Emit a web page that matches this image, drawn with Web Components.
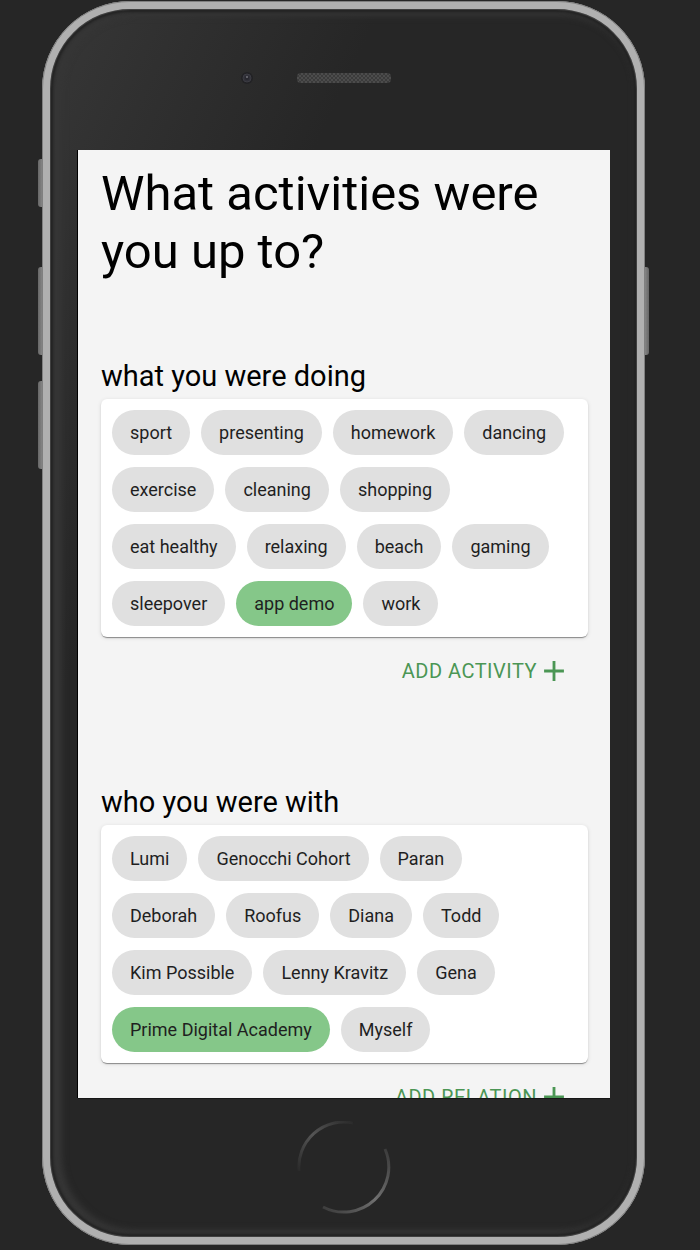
<!DOCTYPE html>
<html lang="en">
<head>
<meta charset="utf-8">
<title>Activities</title>
<style>
  body { margin: 0; background: #262626; color: #000; font-family: Roboto, "Liberation Sans", sans-serif; }
</style>
</head>
<body>
<phone-frame>
  <screen-title>What activities were you up to?</screen-title>
  <chip-section heading="what you were doing" action="Add Activity">
    <choice-chip>sport</choice-chip>
    <choice-chip>presenting</choice-chip>
    <choice-chip>homework</choice-chip>
    <choice-chip>dancing</choice-chip>
    <choice-chip>exercise</choice-chip>
    <choice-chip>cleaning</choice-chip>
    <choice-chip>shopping</choice-chip>
    <choice-chip>eat healthy</choice-chip>
    <choice-chip>relaxing</choice-chip>
    <choice-chip>beach</choice-chip>
    <choice-chip>gaming</choice-chip>
    <choice-chip>sleepover</choice-chip>
    <choice-chip selected>app demo</choice-chip>
    <choice-chip>work</choice-chip>
  </chip-section>
  <chip-section heading="who you were with" action="Add Relation">
    <choice-chip>Lumi</choice-chip>
    <choice-chip>Genocchi Cohort</choice-chip>
    <choice-chip>Paran</choice-chip>
    <choice-chip>Deborah</choice-chip>
    <choice-chip>Roofus</choice-chip>
    <choice-chip>Diana</choice-chip>
    <choice-chip>Todd</choice-chip>
    <choice-chip>Kim Possible</choice-chip>
    <choice-chip>Lenny Kravitz</choice-chip>
    <choice-chip>Gena</choice-chip>
    <choice-chip selected>Prime Digital Academy</choice-chip>
    <choice-chip>Myself</choice-chip>
  </chip-section>
</phone-frame>

<script>
class PhoneFrame extends HTMLElement {
  constructor() {
    super();
    this.attachShadow({ mode: "open" }).innerHTML = `
      <style>
        :host { display: block; box-sizing: border-box; height: 100vh; padding: 1px 55px 5px 42px; }
        .body {
          position: relative; box-sizing: border-box; height: 100%;
          display: flex; flex-direction: column;
          padding: 0 27px 0 28px; border: 8px solid #b0b0b0; border-radius: 88px;
          background: linear-gradient(115deg, #373737 0, #303030 120px, #262626 300px);
          box-shadow: inset 0 0 1px 1px #444, inset 0 0 3px 3px #202020, inset 5px 0 6px 7px #363636;
        }
        .body::after {
          content: ""; position: absolute; inset: -8px; border: 1px solid #808080;
          border-radius: 88px; pointer-events: none;
        }
        .top { flex: 0 0 141px; display: grid; grid-template-columns: 1fr 94px 1fr; }
        .camera { justify-self: end; margin: 62px 43px 0 0; width: 14px; height: 14px; }
        .speaker { margin-top: 64px; width: 94px; height: 10px; }
        .screen {
          flex: 1 1 0; min-height: 0; overflow-y: auto; scrollbar-width: none;
          box-sizing: border-box; padding: 15px 22px 20px 23px; background: #f4f4f4;
          box-shadow: -1px 0 0 #000, 0 1px 0 #161616;
        }
        .bottom { flex: 0 0 139px; display: flex; justify-content: center; align-items: center; }
        .side { position: absolute; width: 4px; border-radius: 3px 0 0 3px; background: linear-gradient(90deg, #666, #858585); }
        .left { left: -12px; }
        .right { right: -12px; transform: scaleX(-1); }
        .mute { top: 150px; height: 48px; }
        .up { top: 258px; height: 88px; }
        .down { top: 372px; height: 88px; }
      </style>
      <div class="body">
        <span class="side left mute"></span>
        <span class="side left up"></span>
        <span class="side left down"></span>
        <span class="side right up"></span>
        <div class="top">
          <svg class="camera" viewBox="0 0 14 14" aria-hidden="true">
            <circle cx="7" cy="7" r="6" fill="#222225"/>
            <circle cx="7" cy="7" r="4" fill="#303038" stroke="#3c3c43"/>
            <circle cx="7" cy="7" r="2" fill="#28282f"/>
            <circle cx="7" cy="6" r="1" fill="#74747c"/>
          </svg>
          <svg class="speaker" viewBox="0 0 94 10" aria-hidden="true">
            <defs><pattern id="mesh" width="4" height="4" patternUnits="userSpaceOnUse">
              <rect width="4" height="4" fill="#3b3b3b"/>
              <rect width="2" height="2" fill="#4c4c4c"/><rect x="2" y="2" width="2" height="2" fill="#4c4c4c"/>
            </pattern></defs>
            <rect width="94" height="10" rx="4" fill="url(#mesh)"/>
          </svg>
        </div>
        <main class="screen"><slot></slot></main>
        <div class="bottom">
          <svg width="94" height="94" viewBox="0 0 94 94" fill="none" stroke-width="2" aria-hidden="true">
            <defs>
              <linearGradient id="a" x1="0" y1="1" x2="1" y2="0"><stop stop-color="#2a2a2a"/><stop offset=".5" stop-color="#555"/><stop offset="1" stop-color="#2a2a2a"/></linearGradient>
              <linearGradient id="b" x1="0" y1="1" x2="1" y2="0"><stop stop-color="#3a3a3a"/><stop offset=".5" stop-color="#707070"/><stop offset="1" stop-color="#3a3a3a"/></linearGradient>
            </defs>
            <path d="M2 50A45 45 0 0 1 56 2" stroke="url(#a)" stroke-width="3"/>
            <path d="M88 28A45 45 0 0 1 26 86" stroke="url(#b)" stroke-width="3"/>
          </svg>
        </div>
      </div>`;
  }
}

class ScreenTitle extends HTMLElement {
  constructor() {
    super();
    this.attachShadow({ mode: "open" }).innerHTML = `
      <style>
        :host { display: block; }
        h1 { margin: 0 0 73px; font-size: 49px; line-height: 58px; font-weight: 400; }
      </style>
      <h1><slot></slot></h1>`;
  }
}

class ChoiceChip extends HTMLElement {
  constructor() {
    super();
    this.attachShadow({ mode: "open" }).innerHTML = `
      <style>
        :host { display: block; }
        button {
          display: block; height: 45px; padding: 0 18px; border: 0; border-radius: 23px;
          background: #e0e0e0; color: #1f1f1f; font: inherit; font-size: 18px; line-height: 45px;
          white-space: nowrap; cursor: pointer;
        }
        button[aria-pressed="true"] { background: #85c789; }
      </style>
      <button type="button"><slot></slot></button>`;
    this.button = this.shadowRoot.querySelector("button");
    this.button.addEventListener("click", () => this.toggleAttribute("selected"));
  }
  static get observedAttributes() { return ["selected"]; }
  connectedCallback() { this.update(); }
  attributeChangedCallback() { this.update(); }
  update() { this.button.setAttribute("aria-pressed", String(this.hasAttribute("selected"))); }
}

class ChipSection extends HTMLElement {
  connectedCallback() {
    if (this.shadowRoot) return;
    this.attachShadow({ mode: "open" }).innerHTML = `
      <style>
        :host { display: block; margin-bottom: 83px; }
        h2 { margin: 0; font-size: 29px; line-height: 45px; font-weight: 400; }
        .card {
          display: flex; flex-wrap: wrap; gap: 12px 11px; padding: 11px 18px 11px 11px;
          border-radius: 6px; background: #fff;
          box-shadow: 0 2px 1px -1px rgba(0,0,0,.25), 0 1px 1px rgba(0,0,0,.18), 0 1px 4px rgba(0,0,0,.12);
        }
        .actions { display: flex; justify-content: flex-end; padding: 8px 17px 0 0; }
        .add {
          display: flex; align-items: center; height: 52px; padding: 0; border: 0; background: none;
          color: #4b9654; font: inherit; font-size: 20px; letter-spacing: 0.025em;
          text-transform: uppercase; cursor: pointer;
        }
        svg { width: 34px; height: 34px; fill: currentColor; }
      </style>
      <section>
        <h2></h2>
        <div class="card"><slot></slot></div>
        <div class="actions">
          <button class="add" type="button"><span></span>
            <svg viewBox="0 0 24 24" aria-hidden="true"><path d="M19 13h-6v6h-2v-6H5v-2h6V5h2v6h6v2z"/></svg>
          </button>
        </div>
      </section>`;
    this.shadowRoot.querySelector("h2").textContent = this.getAttribute("heading");
    this.shadowRoot.querySelector("span").textContent = this.getAttribute("action");
  }
}

customElements.define("phone-frame", PhoneFrame);
customElements.define("screen-title", ScreenTitle);
customElements.define("choice-chip", ChoiceChip);
customElements.define("chip-section", ChipSection);
</script>
</body>
</html>
